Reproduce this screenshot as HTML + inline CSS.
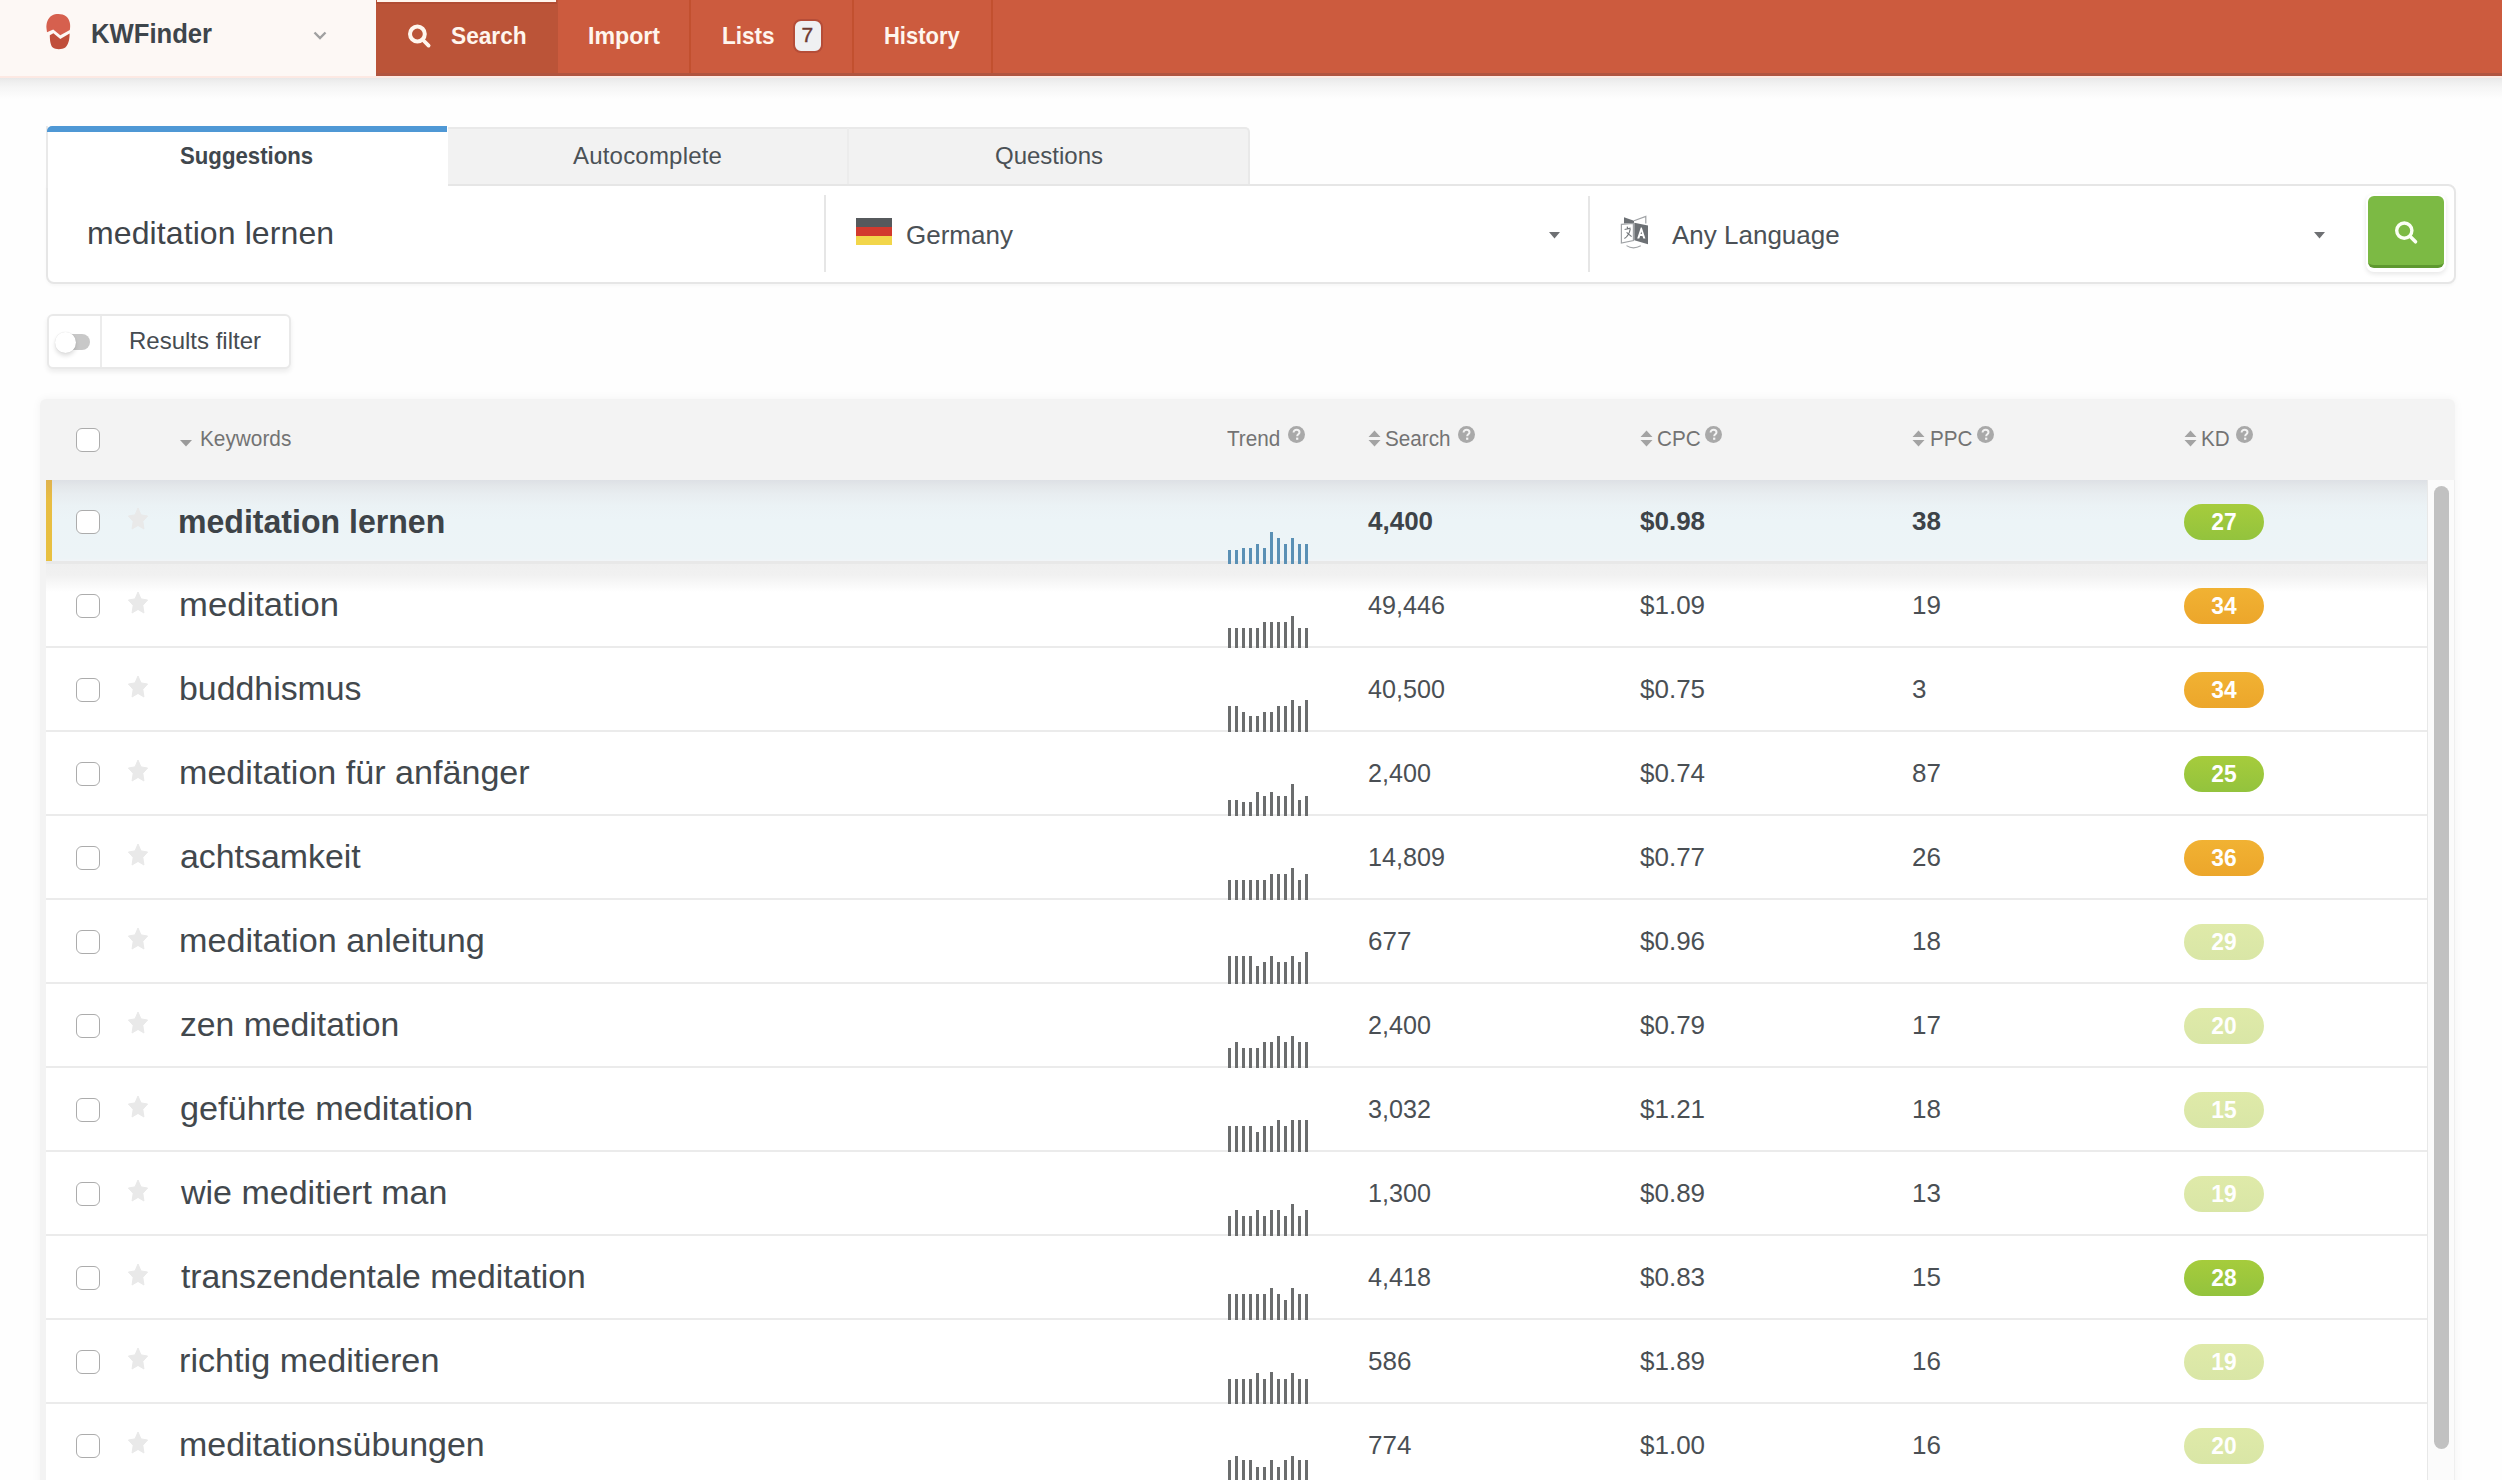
<!DOCTYPE html><html><head><meta charset="utf-8"><title>KWFinder</title><style>
*{box-sizing:border-box;margin:0;padding:0}
html,body{width:2502px;height:1480px;overflow:hidden;background:#fefefe;font-family:"Liberation Sans",sans-serif;}
.a{position:absolute}
.t{position:absolute;white-space:nowrap;line-height:1;}
.cb{position:absolute;left:76px;width:24px;height:24px;border:1.6px solid #acacac;border-radius:6px;background:#fff;}
.star{position:absolute;left:124.5px;width:26px;height:24px;}
.sep{position:absolute;left:46px;width:2381px;height:2px;background:#ebebeb;}
.badge{position:absolute;left:2184px;width:80px;height:36px;border-radius:18px;}
.bg{background:linear-gradient(#a6cc3c,#93c33d)}
.bo{background:linear-gradient(#f1b233,#eca62b)}
.bp{background:linear-gradient(#dfeaa9,#d9e6a6)}
.bar{position:absolute;width:3px;}
.help{position:absolute;width:17px;height:17px;}
.sort{position:absolute;width:13px;height:17px;}
</style></head><body>
<div class="a" style="left:0;top:77px;width:2502px;height:22px;background:linear-gradient(#e6e6e6,#efefef 5px,#f6f6f6 11px,rgba(253,253,253,0));"></div>
<div class="a" style="left:0;top:0;width:2502px;height:76px;background:#cc5b3e;"></div>
<div class="a" style="left:0;top:0;width:376px;height:76px;background:#fdf8f5;"></div>
<svg class="a" style="left:0;top:0" width="80" height="60" viewBox="0 0 80 60"><path d="M47 32.3 L53.2 29.4 L60.3 35.2 L69.8 30 C70.8 25 70 19.5 66 16.3 C62.5 13.6 56 13.4 52 15.5 C47.5 18 46 24 46.5 28.5 Z" fill="#d6604e"/><path d="M49.8 35.3 L53.4 33.3 L60.3 39.0 L69.6 33.6 C69.8 40 68 45.5 65.3 47.6 C62 49.8 55.5 49.8 52.8 47.6 C50.5 45.5 49.8 40.5 49.8 35.3 Z" fill="#c04e3a"/></svg>
<div class="t" style="left:91px;top:20.30px;font-size:28px;color:#3e454b;font-weight:700;transform:scaleX(0.916);transform-origin:0 0;">KWFinder</div>
<svg class="a" style="left:313px;top:31px" width="14" height="9" viewBox="0 0 14 9"><path d="M1.5 1.5 L7 7 L12.5 1.5" stroke="#a0a0a0" stroke-width="2.4" fill="none"/></svg>
<div class="a" style="left:376px;top:0;width:182px;height:76px;background:#bb5438;"></div>
<div class="a" style="left:377px;top:0;width:179px;height:2px;background:#fff6ee;"></div>
<div class="a" style="left:376px;top:2px;width:181px;height:2px;background:#b04c33;"></div>
<svg class="a" style="left:406px;top:23px" width="26" height="26" viewBox="0 0 26 26"><circle cx="11.4" cy="11" r="7.4" stroke="#fff6ee" stroke-width="4" fill="none"/><path d="M17 17 L22.6 22.6" stroke="#fff6ee" stroke-width="3.8" stroke-linecap="round"/></svg>
<div class="t" style="left:451px;top:23.98px;font-size:24px;color:#fff6ee;font-weight:700;transform:scaleX(0.945);transform-origin:0 0;">Search</div>
<div class="t" style="left:588px;top:23.98px;font-size:24px;color:#fff6ee;font-weight:700;transform:scaleX(0.965);transform-origin:0 0;">Import</div>
<div class="a" style="left:689px;top:0;width:2px;height:76px;background:#c2502f;"></div>
<div class="t" style="left:722px;top:23.98px;font-size:24px;color:#fff6ee;font-weight:700;transform:scaleX(0.94);transform-origin:0 0;">Lists</div>
<div class="a" style="left:793px;top:19px;width:30px;height:34px;border-radius:8px;background:#eff0f2;border:2px solid #b54d38;"></div>
<div class="t" style="left:801.5px;top:24.22px;font-size:21px;color:#6e3a30;font-weight:400;-webkit-text-stroke:0.4px #6e3a30;">7</div>
<div class="a" style="left:852px;top:0;width:2px;height:76px;background:#c2502f;"></div>
<div class="t" style="left:884px;top:23.98px;font-size:24px;color:#fff6ee;font-weight:700;transform:scaleX(0.915);transform-origin:0 0;">History</div>
<div class="a" style="left:991px;top:0;width:2px;height:76px;background:#c2502f;"></div>
<div class="a" style="left:376px;top:73px;width:2126px;height:3px;background:#b0543f;"></div>
<div class="a" style="left:0;top:76px;width:2502px;height:2px;background:#fde9e3;"></div>
<div class="a" style="left:446px;top:127px;width:804px;height:59px;background:#f2f2f2;border:2px solid #e9e9e9;border-bottom:none;border-radius:0 5px 0 0;"></div>
<div class="a" style="left:847px;top:128px;width:2px;height:57px;background:#ececec;"></div>
<div class="a" style="left:46px;top:184px;width:2410px;height:100px;background:#fff;border:2px solid #e6e6e6;border-radius:0 8px 8px 8px;box-shadow:0 2px 3px rgba(0,0,0,0.03);"></div>
<div class="a" style="left:46px;top:126px;width:402px;height:62px;background:#fff;border-left:2px solid #e9e9e9;"></div>
<div class="a" style="left:47px;top:126px;width:400px;height:6px;background:#4f98d5;border-radius:5px 0 0 0;"></div>
<div class="t" style="left:180px;top:143.68px;font-size:24px;color:#40474d;font-weight:700;transform:scaleX(0.925);transform-origin:0 0;">Suggestions</div>
<div class="t" style="left:573px;top:143.68px;font-size:24px;color:#4b5156;font-weight:400;letter-spacing:0.2px;">Autocomplete</div>
<div class="t" style="left:995px;top:143.68px;font-size:24px;color:#4b5156;font-weight:400;">Questions</div>
<div class="t" style="left:87px;top:216.91px;font-size:32px;color:#3f454a;font-weight:400;letter-spacing:0.1px;">meditation lernen</div>
<div class="a" style="left:824px;top:195px;width:2px;height:77px;background:#e6e6e6;"></div>
<div class="a" style="left:856px;top:218px;width:36px;height:9px;background:#56595c;"></div>
<div class="a" style="left:856px;top:227px;width:36px;height:9px;background:#d23a2e;"></div>
<div class="a" style="left:856px;top:236px;width:36px;height:9px;background:#f2d64a;"></div>
<div class="t" style="left:906px;top:221.69px;font-size:26px;color:#4b5156;font-weight:400;">Germany</div>
<svg class="a" style="left:1549px;top:232px" width="11" height="7"><path d="M0 0 L11 0 L5.5 6.5 Z" fill="#6e7073"/></svg>
<div class="a" style="left:1588px;top:196px;width:2px;height:76px;background:#e6e6e6;"></div>
<svg class="a" style="left:1612px;top:210px" width="44" height="44" viewBox="0 0 44 44"><path d="M12 7.3 L22 10.8 L22 13 L12 13.6 Z" fill="#6c7074"/><path d="M9.4 14.4 L21.4 13.4 L21.4 30.6 L9.4 33 Z" fill="#fff" stroke="#a0a3a6" stroke-width="1.2"/><path d="M22.3 12.8 L36 15.4 L36 34.2 L22.3 30.2 Z" fill="#6c7074"/><path d="M22 10.8 L33.8 6.4 L33.8 13.6" fill="none" stroke="#a0a3a6" stroke-width="1.2"/><path d="M25.2 28.6 L28.8 17.4 L29.8 17.4 L33.4 28.6 L31.3 28.6 L30.5 26 L28.1 26 L27.3 28.6 Z M28.6 24 L30 24 L29.3 21.4 Z" fill="#fff"/><path d="M12.6 19.5 L18.6 18.2 M15.2 16.6 L15.6 18.4 M18.2 19 Q17.2 25.5 12.4 28.6 M14.6 22.4 L19.6 26.6" fill="none" stroke="#75797d" stroke-width="1.2"/><path d="M14.5 35.6 Q21 40 28.8 35.8" fill="none" stroke="#a3a6a9" stroke-width="1.1"/></svg>
<div class="t" style="left:1672px;top:221.69px;font-size:26px;color:#4b5156;font-weight:400;">Any Language</div>
<svg class="a" style="left:2314px;top:232px" width="11" height="7"><path d="M0 0 L11 0 L5.5 6.5 Z" fill="#6e7073"/></svg>
<div class="a" style="left:2366px;top:194px;width:80px;height:78px;border-radius:8px;box-shadow:0 2px 5px rgba(0,0,0,0.10);"></div>
<div class="a" style="left:2368px;top:196px;width:76px;height:72px;background:#7cba44;border-bottom:3px solid #5e982f;border-radius:6px;"></div>
<svg class="a" style="left:2392px;top:218px" width="28" height="28" viewBox="0 0 28 28"><circle cx="12.3" cy="12.6" r="7.6" stroke="#fbfff5" stroke-width="3.4" fill="none"/><path d="M18 18.3 L23.5 23.8" stroke="#fbfff5" stroke-width="3.6" stroke-linecap="round"/></svg>
<div class="a" style="left:47px;top:314px;width:244px;height:55px;background:#fff;border:2px solid #e9e9e9;border-radius:6px;box-shadow:0 3px 5px rgba(0,0,0,0.07);"></div>
<div class="a" style="left:100px;top:316px;width:2px;height:51px;background:#ececec;"></div>
<div class="a" style="left:57px;top:334px;width:33px;height:16px;border-radius:8px;background:#c8c8c8;"></div>
<div class="a" style="left:55px;top:332px;width:21px;height:21px;border-radius:50%;background:#fff;box-shadow:0 3px 4px rgba(0,0,0,0.13),0 0 1px rgba(0,0,0,0.15);"></div>
<div class="t" style="left:129px;top:329.48px;font-size:24px;color:#464c51;font-weight:400;">Results filter</div>
<div class="a" style="left:40px;top:399px;width:2415px;height:1200px;border-radius:6px;box-shadow:0 0 10px rgba(0,0,0,0.05);background:#f3f3f3;"></div>
<div class="a" style="left:46px;top:480px;width:2381px;height:1000px;background:#fff;"></div>
<div class="a" style="left:2427px;top:480px;width:28px;height:1000px;background:#fbfbfb;border-left:1.5px solid #e8e8e8;border-right:1.5px solid #efefef;"></div>
<div class="cb" style="top:428px;"></div>
<svg class="a" style="left:180px;top:440px" width="12" height="7"><path d="M0 0 L12 0 L6 6.5 Z" fill="#9a9a9a"/></svg>
<div class="t" style="left:199.5px;top:428.38px;font-size:22px;color:#737373;font-weight:400;transform:scaleX(0.945);transform-origin:0 0;">Keywords</div>
<div class="t" style="left:1227px;top:428.38px;font-size:22px;color:#737373;font-weight:400;transform:scaleX(0.94);transform-origin:0 0;">Trend</div>
<svg class="help" style="left:1288px;top:426px" width="17" height="17" viewBox="0 0 17 17"><circle cx="8.5" cy="8.5" r="8.5" fill="#a9a9a9"/><path d="M5.6 6.6 C5.6 4.8 6.9 3.8 8.6 3.8 C10.3 3.8 11.5 4.8 11.5 6.3 C11.5 8.3 9.2 8.3 9.2 10.2" stroke="#f3f3f3" stroke-width="2" fill="none"/><rect x="8.1" y="11.6" width="2.2" height="2.2" fill="#f3f3f3"/></svg>
<svg class="sort" style="left:1368px;top:430px" width="13" height="17" viewBox="0 0 13 17"><path d="M6.5 0.5 L12.5 7 L0.5 7 Z M0.5 10 L12.5 10 L6.5 16.5 Z" fill="#a3a3a3"/></svg>
<div class="t" style="left:1385px;top:428.38px;font-size:22px;color:#737373;font-weight:400;transform:scaleX(0.94);transform-origin:0 0;">Search</div>
<svg class="help" style="left:1458px;top:426px" width="17" height="17" viewBox="0 0 17 17"><circle cx="8.5" cy="8.5" r="8.5" fill="#a9a9a9"/><path d="M5.6 6.6 C5.6 4.8 6.9 3.8 8.6 3.8 C10.3 3.8 11.5 4.8 11.5 6.3 C11.5 8.3 9.2 8.3 9.2 10.2" stroke="#f3f3f3" stroke-width="2" fill="none"/><rect x="8.1" y="11.6" width="2.2" height="2.2" fill="#f3f3f3"/></svg>
<svg class="sort" style="left:1640px;top:430px" width="13" height="17" viewBox="0 0 13 17"><path d="M6.5 0.5 L12.5 7 L0.5 7 Z M0.5 10 L12.5 10 L6.5 16.5 Z" fill="#a3a3a3"/></svg>
<div class="t" style="left:1657px;top:428.38px;font-size:22px;color:#737373;font-weight:400;transform:scaleX(0.94);transform-origin:0 0;">CPC</div>
<svg class="help" style="left:1705px;top:426px" width="17" height="17" viewBox="0 0 17 17"><circle cx="8.5" cy="8.5" r="8.5" fill="#a9a9a9"/><path d="M5.6 6.6 C5.6 4.8 6.9 3.8 8.6 3.8 C10.3 3.8 11.5 4.8 11.5 6.3 C11.5 8.3 9.2 8.3 9.2 10.2" stroke="#f3f3f3" stroke-width="2" fill="none"/><rect x="8.1" y="11.6" width="2.2" height="2.2" fill="#f3f3f3"/></svg>
<svg class="sort" style="left:1912px;top:430px" width="13" height="17" viewBox="0 0 13 17"><path d="M6.5 0.5 L12.5 7 L0.5 7 Z M0.5 10 L12.5 10 L6.5 16.5 Z" fill="#a3a3a3"/></svg>
<div class="t" style="left:1930px;top:428.38px;font-size:22px;color:#737373;font-weight:400;transform:scaleX(0.94);transform-origin:0 0;">PPC</div>
<svg class="help" style="left:1977px;top:426px" width="17" height="17" viewBox="0 0 17 17"><circle cx="8.5" cy="8.5" r="8.5" fill="#a9a9a9"/><path d="M5.6 6.6 C5.6 4.8 6.9 3.8 8.6 3.8 C10.3 3.8 11.5 4.8 11.5 6.3 C11.5 8.3 9.2 8.3 9.2 10.2" stroke="#f3f3f3" stroke-width="2" fill="none"/><rect x="8.1" y="11.6" width="2.2" height="2.2" fill="#f3f3f3"/></svg>
<svg class="sort" style="left:2184px;top:430px" width="13" height="17" viewBox="0 0 13 17"><path d="M6.5 0.5 L12.5 7 L0.5 7 Z M0.5 10 L12.5 10 L6.5 16.5 Z" fill="#a3a3a3"/></svg>
<div class="t" style="left:2201px;top:428.38px;font-size:22px;color:#737373;font-weight:400;transform:scaleX(0.94);transform-origin:0 0;">KD</div>
<svg class="help" style="left:2236px;top:426px" width="17" height="17" viewBox="0 0 17 17"><circle cx="8.5" cy="8.5" r="8.5" fill="#a9a9a9"/><path d="M5.6 6.6 C5.6 4.8 6.9 3.8 8.6 3.8 C10.3 3.8 11.5 4.8 11.5 6.3 C11.5 8.3 9.2 8.3 9.2 10.2" stroke="#f3f3f3" stroke-width="2" fill="none"/><rect x="8.1" y="11.6" width="2.2" height="2.2" fill="#f3f3f3"/></svg>
<div class="a" style="left:46px;top:480px;width:2381px;height:81px;background:linear-gradient(#dde0e5,#e3e7ea 6px,#e8edf0 14px,#ebf2f5 26px,#ecf4f7 40px,#edf4f7 78px,#f1f4f7 81px);"></div>
<div class="a" style="left:46px;top:561px;width:2381px;height:3px;background:#e8e8e8;"></div>
<div class="a" style="left:46px;top:564px;width:2381px;height:28px;background:linear-gradient(#efefef,#f1f1f1 11px,#f6f6f6 17px,#fafafa 22px,rgba(255,255,255,0));"></div>
<div class="a" style="left:46px;top:480px;width:6px;height:81px;background:linear-gradient(#dfb24e,#e8bd42 20px,#e8c040);"></div>
<div class="cb" style="top:510px;"></div>
<div class="star" style="top:507px;"><svg width="26" height="24" viewBox="0 0 26 24"><path d="M13.00 1.00 L15.97 7.91 L22.60 9.02 L17.80 14.39 L18.93 21.98 L13.00 18.40 L7.07 21.98 L8.20 14.39 L3.40 9.02 L10.03 7.91 Z" fill="#e9e9e9" stroke="#e9e9e9" stroke-width="1" stroke-linejoin="round"/></svg></div>
<div class="t" style="left:178px;top:503.72px;font-size:34px;color:#3d4348;font-weight:700;transform:scaleX(0.943);transform-origin:0 0;">meditation lernen</div>
<div class="bar" style="left:1228px;top:550px;height:14px;background:#5a90b5;"></div>
<div class="bar" style="left:1235px;top:550px;height:14px;background:#5a90b5;"></div>
<div class="bar" style="left:1242px;top:548px;height:16px;background:#5a90b5;"></div>
<div class="bar" style="left:1249px;top:548px;height:16px;background:#5a90b5;"></div>
<div class="bar" style="left:1256px;top:544px;height:20px;background:#5a90b5;"></div>
<div class="bar" style="left:1263px;top:548px;height:16px;background:#5a90b5;"></div>
<div class="bar" style="left:1270px;top:532px;height:32px;background:#5a90b5;"></div>
<div class="bar" style="left:1277px;top:538px;height:26px;background:#5a90b5;"></div>
<div class="bar" style="left:1284px;top:544px;height:20px;background:#5a90b5;"></div>
<div class="bar" style="left:1291px;top:538px;height:26px;background:#5a90b5;"></div>
<div class="bar" style="left:1298px;top:544px;height:20px;background:#5a90b5;"></div>
<div class="bar" style="left:1305px;top:544px;height:20px;background:#5a90b5;"></div>
<div class="t" style="left:1368px;top:508.49px;font-size:26px;color:#3d4348;font-weight:700;">4,400</div>
<div class="t" style="left:1640px;top:508.49px;font-size:26px;color:#3d4348;font-weight:700;">$0.98</div>
<div class="t" style="left:1912px;top:508.49px;font-size:26px;color:#3d4348;font-weight:700;">38</div>
<div class="badge bg" style="top:504px;"></div>
<div class="t" style="left:2224px;top:510.18px;font-size:24px;color:#ffffff;font-weight:700;transform:translateX(-50%) scaleX(0.95);">27</div>
<div class="sep" style="top:646px;"></div>
<div class="cb" style="top:594px;"></div>
<div class="star" style="top:591px;"><svg width="26" height="24" viewBox="0 0 26 24"><path d="M13.00 1.00 L15.97 7.91 L22.60 9.02 L17.80 14.39 L18.93 21.98 L13.00 18.40 L7.07 21.98 L8.20 14.39 L3.40 9.02 L10.03 7.91 Z" fill="#e9e9e9" stroke="#e9e9e9" stroke-width="1" stroke-linejoin="round"/></svg></div>
<div class="t" style="left:178.96px;top:587.02px;font-size:34px;color:#42484d;font-weight:400;transform:scaleX(1.0196);transform-origin:0 0;">meditation</div>
<div class="bar" style="left:1228px;top:628px;height:20px;background:#6b6d6e;"></div>
<div class="bar" style="left:1235px;top:628px;height:20px;background:#6b6d6e;"></div>
<div class="bar" style="left:1242px;top:628px;height:20px;background:#6b6d6e;"></div>
<div class="bar" style="left:1249px;top:628px;height:20px;background:#6b6d6e;"></div>
<div class="bar" style="left:1256px;top:628px;height:20px;background:#6b6d6e;"></div>
<div class="bar" style="left:1263px;top:622px;height:26px;background:#6b6d6e;"></div>
<div class="bar" style="left:1270px;top:622px;height:26px;background:#6b6d6e;"></div>
<div class="bar" style="left:1277px;top:622px;height:26px;background:#6b6d6e;"></div>
<div class="bar" style="left:1284px;top:622px;height:26px;background:#6b6d6e;"></div>
<div class="bar" style="left:1291px;top:616px;height:32px;background:#6b6d6e;"></div>
<div class="bar" style="left:1298px;top:628px;height:20px;background:#6b6d6e;"></div>
<div class="bar" style="left:1305px;top:628px;height:20px;background:#6b6d6e;"></div>
<div class="t" style="left:1368px;top:592.49px;font-size:26px;color:#4a4f54;font-weight:400;transform:scaleX(0.967);transform-origin:0 0;">49,446</div>
<div class="t" style="left:1640px;top:592.49px;font-size:26px;color:#4a4f54;font-weight:400;">$1.09</div>
<div class="t" style="left:1912px;top:592.49px;font-size:26px;color:#4a4f54;font-weight:400;">19</div>
<div class="badge bo" style="top:588px;"></div>
<div class="t" style="left:2224px;top:594.18px;font-size:24px;color:#ffffff;font-weight:700;transform:translateX(-50%) scaleX(0.95);">34</div>
<div class="sep" style="top:730px;"></div>
<div class="cb" style="top:678px;"></div>
<div class="star" style="top:675px;"><svg width="26" height="24" viewBox="0 0 26 24"><path d="M13.00 1.00 L15.97 7.91 L22.60 9.02 L17.80 14.39 L18.93 21.98 L13.00 18.40 L7.07 21.98 L8.20 14.39 L3.40 9.02 L10.03 7.91 Z" fill="#e9e9e9" stroke="#e9e9e9" stroke-width="1" stroke-linejoin="round"/></svg></div>
<div class="t" style="left:179.01px;top:671.02px;font-size:34px;color:#42484d;font-weight:400;transform:scaleX(0.9956);transform-origin:0 0;">buddhismus</div>
<div class="bar" style="left:1228px;top:706px;height:26px;background:#6b6d6e;"></div>
<div class="bar" style="left:1235px;top:706px;height:26px;background:#6b6d6e;"></div>
<div class="bar" style="left:1242px;top:712px;height:20px;background:#6b6d6e;"></div>
<div class="bar" style="left:1249px;top:716px;height:16px;background:#6b6d6e;"></div>
<div class="bar" style="left:1256px;top:716px;height:16px;background:#6b6d6e;"></div>
<div class="bar" style="left:1263px;top:712px;height:20px;background:#6b6d6e;"></div>
<div class="bar" style="left:1270px;top:712px;height:20px;background:#6b6d6e;"></div>
<div class="bar" style="left:1277px;top:706px;height:26px;background:#6b6d6e;"></div>
<div class="bar" style="left:1284px;top:706px;height:26px;background:#6b6d6e;"></div>
<div class="bar" style="left:1291px;top:700px;height:32px;background:#6b6d6e;"></div>
<div class="bar" style="left:1298px;top:706px;height:26px;background:#6b6d6e;"></div>
<div class="bar" style="left:1305px;top:700px;height:32px;background:#6b6d6e;"></div>
<div class="t" style="left:1368px;top:676.49px;font-size:26px;color:#4a4f54;font-weight:400;transform:scaleX(0.967);transform-origin:0 0;">40,500</div>
<div class="t" style="left:1640px;top:676.49px;font-size:26px;color:#4a4f54;font-weight:400;">$0.75</div>
<div class="t" style="left:1912px;top:676.49px;font-size:26px;color:#4a4f54;font-weight:400;">3</div>
<div class="badge bo" style="top:672px;"></div>
<div class="t" style="left:2224px;top:678.18px;font-size:24px;color:#ffffff;font-weight:700;transform:translateX(-50%) scaleX(0.95);">34</div>
<div class="sep" style="top:814px;"></div>
<div class="cb" style="top:762px;"></div>
<div class="star" style="top:759px;"><svg width="26" height="24" viewBox="0 0 26 24"><path d="M13.00 1.00 L15.97 7.91 L22.60 9.02 L17.80 14.39 L18.93 21.98 L13.00 18.40 L7.07 21.98 L8.20 14.39 L3.40 9.02 L10.03 7.91 Z" fill="#e9e9e9" stroke="#e9e9e9" stroke-width="1" stroke-linejoin="round"/></svg></div>
<div class="t" style="left:178.99px;top:755.02px;font-size:34px;color:#42484d;font-weight:400;transform:scaleX(1.0029);transform-origin:0 0;">meditation für anfänger</div>
<div class="bar" style="left:1228px;top:800px;height:16px;background:#6b6d6e;"></div>
<div class="bar" style="left:1235px;top:800px;height:16px;background:#6b6d6e;"></div>
<div class="bar" style="left:1242px;top:802px;height:14px;background:#6b6d6e;"></div>
<div class="bar" style="left:1249px;top:802px;height:14px;background:#6b6d6e;"></div>
<div class="bar" style="left:1256px;top:792px;height:24px;background:#6b6d6e;"></div>
<div class="bar" style="left:1263px;top:796px;height:20px;background:#6b6d6e;"></div>
<div class="bar" style="left:1270px;top:792px;height:24px;background:#6b6d6e;"></div>
<div class="bar" style="left:1277px;top:796px;height:20px;background:#6b6d6e;"></div>
<div class="bar" style="left:1284px;top:796px;height:20px;background:#6b6d6e;"></div>
<div class="bar" style="left:1291px;top:784px;height:32px;background:#6b6d6e;"></div>
<div class="bar" style="left:1298px;top:800px;height:16px;background:#6b6d6e;"></div>
<div class="bar" style="left:1305px;top:796px;height:20px;background:#6b6d6e;"></div>
<div class="t" style="left:1368px;top:760.49px;font-size:26px;color:#4a4f54;font-weight:400;transform:scaleX(0.967);transform-origin:0 0;">2,400</div>
<div class="t" style="left:1640px;top:760.49px;font-size:26px;color:#4a4f54;font-weight:400;">$0.74</div>
<div class="t" style="left:1912px;top:760.49px;font-size:26px;color:#4a4f54;font-weight:400;">87</div>
<div class="badge bg" style="top:756px;"></div>
<div class="t" style="left:2224px;top:762.18px;font-size:24px;color:#ffffff;font-weight:700;transform:translateX(-50%) scaleX(0.95);">25</div>
<div class="sep" style="top:898px;"></div>
<div class="cb" style="top:846px;"></div>
<div class="star" style="top:843px;"><svg width="26" height="24" viewBox="0 0 26 24"><path d="M13.00 1.00 L15.97 7.91 L22.60 9.02 L17.80 14.39 L18.93 21.98 L13.00 18.40 L7.07 21.98 L8.20 14.39 L3.40 9.02 L10.03 7.91 Z" fill="#e9e9e9" stroke="#e9e9e9" stroke-width="1" stroke-linejoin="round"/></svg></div>
<div class="t" style="left:180.0px;top:839.02px;font-size:34px;color:#42484d;font-weight:400;transform:scaleX(0.9961);transform-origin:0 0;">achtsamkeit</div>
<div class="bar" style="left:1228px;top:880px;height:20px;background:#6b6d6e;"></div>
<div class="bar" style="left:1235px;top:880px;height:20px;background:#6b6d6e;"></div>
<div class="bar" style="left:1242px;top:880px;height:20px;background:#6b6d6e;"></div>
<div class="bar" style="left:1249px;top:880px;height:20px;background:#6b6d6e;"></div>
<div class="bar" style="left:1256px;top:880px;height:20px;background:#6b6d6e;"></div>
<div class="bar" style="left:1263px;top:880px;height:20px;background:#6b6d6e;"></div>
<div class="bar" style="left:1270px;top:874px;height:26px;background:#6b6d6e;"></div>
<div class="bar" style="left:1277px;top:874px;height:26px;background:#6b6d6e;"></div>
<div class="bar" style="left:1284px;top:874px;height:26px;background:#6b6d6e;"></div>
<div class="bar" style="left:1291px;top:868px;height:32px;background:#6b6d6e;"></div>
<div class="bar" style="left:1298px;top:880px;height:20px;background:#6b6d6e;"></div>
<div class="bar" style="left:1305px;top:874px;height:26px;background:#6b6d6e;"></div>
<div class="t" style="left:1368px;top:844.49px;font-size:26px;color:#4a4f54;font-weight:400;transform:scaleX(0.967);transform-origin:0 0;">14,809</div>
<div class="t" style="left:1640px;top:844.49px;font-size:26px;color:#4a4f54;font-weight:400;">$0.77</div>
<div class="t" style="left:1912px;top:844.49px;font-size:26px;color:#4a4f54;font-weight:400;">26</div>
<div class="badge bo" style="top:840px;"></div>
<div class="t" style="left:2224px;top:846.18px;font-size:24px;color:#ffffff;font-weight:700;transform:translateX(-50%) scaleX(0.95);">36</div>
<div class="sep" style="top:982px;"></div>
<div class="cb" style="top:930px;"></div>
<div class="star" style="top:927px;"><svg width="26" height="24" viewBox="0 0 26 24"><path d="M13.00 1.00 L15.97 7.91 L22.60 9.02 L17.80 14.39 L18.93 21.98 L13.00 18.40 L7.07 21.98 L8.20 14.39 L3.40 9.02 L10.03 7.91 Z" fill="#e9e9e9" stroke="#e9e9e9" stroke-width="1" stroke-linejoin="round"/></svg></div>
<div class="t" style="left:178.99px;top:923.02px;font-size:34px;color:#42484d;font-weight:400;transform:scaleX(1.005);transform-origin:0 0;">meditation anleitung</div>
<div class="bar" style="left:1228px;top:956px;height:28px;background:#6b6d6e;"></div>
<div class="bar" style="left:1235px;top:956px;height:28px;background:#6b6d6e;"></div>
<div class="bar" style="left:1242px;top:956px;height:28px;background:#6b6d6e;"></div>
<div class="bar" style="left:1249px;top:956px;height:28px;background:#6b6d6e;"></div>
<div class="bar" style="left:1256px;top:966px;height:18px;background:#6b6d6e;"></div>
<div class="bar" style="left:1263px;top:962px;height:22px;background:#6b6d6e;"></div>
<div class="bar" style="left:1270px;top:956px;height:28px;background:#6b6d6e;"></div>
<div class="bar" style="left:1277px;top:962px;height:22px;background:#6b6d6e;"></div>
<div class="bar" style="left:1284px;top:962px;height:22px;background:#6b6d6e;"></div>
<div class="bar" style="left:1291px;top:956px;height:28px;background:#6b6d6e;"></div>
<div class="bar" style="left:1298px;top:962px;height:22px;background:#6b6d6e;"></div>
<div class="bar" style="left:1305px;top:952px;height:32px;background:#6b6d6e;"></div>
<div class="t" style="left:1368px;top:928.49px;font-size:26px;color:#4a4f54;font-weight:400;">677</div>
<div class="t" style="left:1640px;top:928.49px;font-size:26px;color:#4a4f54;font-weight:400;">$0.96</div>
<div class="t" style="left:1912px;top:928.49px;font-size:26px;color:#4a4f54;font-weight:400;">18</div>
<div class="badge bp" style="top:924px;"></div>
<div class="t" style="left:2224px;top:930.18px;font-size:24px;color:#ffffff;font-weight:700;transform:translateX(-50%) scaleX(0.95);">29</div>
<div class="sep" style="top:1066px;"></div>
<div class="cb" style="top:1014px;"></div>
<div class="star" style="top:1011px;"><svg width="26" height="24" viewBox="0 0 26 24"><path d="M13.00 1.00 L15.97 7.91 L22.60 9.02 L17.80 14.39 L18.93 21.98 L13.00 18.40 L7.07 21.98 L8.20 14.39 L3.40 9.02 L10.03 7.91 Z" fill="#e9e9e9" stroke="#e9e9e9" stroke-width="1" stroke-linejoin="round"/></svg></div>
<div class="t" style="left:180.01px;top:1007.02px;font-size:34px;color:#42484d;font-weight:400;transform:scaleX(0.9917);transform-origin:0 0;">zen meditation</div>
<div class="bar" style="left:1228px;top:1048px;height:20px;background:#6b6d6e;"></div>
<div class="bar" style="left:1235px;top:1042px;height:26px;background:#6b6d6e;"></div>
<div class="bar" style="left:1242px;top:1048px;height:20px;background:#6b6d6e;"></div>
<div class="bar" style="left:1249px;top:1048px;height:20px;background:#6b6d6e;"></div>
<div class="bar" style="left:1256px;top:1048px;height:20px;background:#6b6d6e;"></div>
<div class="bar" style="left:1263px;top:1042px;height:26px;background:#6b6d6e;"></div>
<div class="bar" style="left:1270px;top:1042px;height:26px;background:#6b6d6e;"></div>
<div class="bar" style="left:1277px;top:1036px;height:32px;background:#6b6d6e;"></div>
<div class="bar" style="left:1284px;top:1042px;height:26px;background:#6b6d6e;"></div>
<div class="bar" style="left:1291px;top:1036px;height:32px;background:#6b6d6e;"></div>
<div class="bar" style="left:1298px;top:1042px;height:26px;background:#6b6d6e;"></div>
<div class="bar" style="left:1305px;top:1042px;height:26px;background:#6b6d6e;"></div>
<div class="t" style="left:1368px;top:1012.49px;font-size:26px;color:#4a4f54;font-weight:400;transform:scaleX(0.967);transform-origin:0 0;">2,400</div>
<div class="t" style="left:1640px;top:1012.49px;font-size:26px;color:#4a4f54;font-weight:400;">$0.79</div>
<div class="t" style="left:1912px;top:1012.49px;font-size:26px;color:#4a4f54;font-weight:400;">17</div>
<div class="badge bp" style="top:1008px;"></div>
<div class="t" style="left:2224px;top:1014.18px;font-size:24px;color:#ffffff;font-weight:700;transform:translateX(-50%) scaleX(0.95);">20</div>
<div class="sep" style="top:1150px;"></div>
<div class="cb" style="top:1098px;"></div>
<div class="star" style="top:1095px;"><svg width="26" height="24" viewBox="0 0 26 24"><path d="M13.00 1.00 L15.97 7.91 L22.60 9.02 L17.80 14.39 L18.93 21.98 L13.00 18.40 L7.07 21.98 L8.20 14.39 L3.40 9.02 L10.03 7.91 Z" fill="#e9e9e9" stroke="#e9e9e9" stroke-width="1" stroke-linejoin="round"/></svg></div>
<div class="t" style="left:179.99px;top:1091.02px;font-size:34px;color:#42484d;font-weight:400;transform:scaleX(1.0069);transform-origin:0 0;">geführte meditation</div>
<div class="bar" style="left:1228px;top:1126px;height:26px;background:#6b6d6e;"></div>
<div class="bar" style="left:1235px;top:1126px;height:26px;background:#6b6d6e;"></div>
<div class="bar" style="left:1242px;top:1126px;height:26px;background:#6b6d6e;"></div>
<div class="bar" style="left:1249px;top:1126px;height:26px;background:#6b6d6e;"></div>
<div class="bar" style="left:1256px;top:1132px;height:20px;background:#6b6d6e;"></div>
<div class="bar" style="left:1263px;top:1126px;height:26px;background:#6b6d6e;"></div>
<div class="bar" style="left:1270px;top:1126px;height:26px;background:#6b6d6e;"></div>
<div class="bar" style="left:1277px;top:1120px;height:32px;background:#6b6d6e;"></div>
<div class="bar" style="left:1284px;top:1126px;height:26px;background:#6b6d6e;"></div>
<div class="bar" style="left:1291px;top:1120px;height:32px;background:#6b6d6e;"></div>
<div class="bar" style="left:1298px;top:1120px;height:32px;background:#6b6d6e;"></div>
<div class="bar" style="left:1305px;top:1120px;height:32px;background:#6b6d6e;"></div>
<div class="t" style="left:1368px;top:1096.49px;font-size:26px;color:#4a4f54;font-weight:400;transform:scaleX(0.967);transform-origin:0 0;">3,032</div>
<div class="t" style="left:1640px;top:1096.49px;font-size:26px;color:#4a4f54;font-weight:400;">$1.21</div>
<div class="t" style="left:1912px;top:1096.49px;font-size:26px;color:#4a4f54;font-weight:400;">18</div>
<div class="badge bp" style="top:1092px;"></div>
<div class="t" style="left:2224px;top:1098.18px;font-size:24px;color:#ffffff;font-weight:700;transform:translateX(-50%) scaleX(0.95);">15</div>
<div class="sep" style="top:1234px;"></div>
<div class="cb" style="top:1182px;"></div>
<div class="star" style="top:1179px;"><svg width="26" height="24" viewBox="0 0 26 24"><path d="M13.00 1.00 L15.97 7.91 L22.60 9.02 L17.80 14.39 L18.93 21.98 L13.00 18.40 L7.07 21.98 L8.20 14.39 L3.40 9.02 L10.03 7.91 Z" fill="#e9e9e9" stroke="#e9e9e9" stroke-width="1" stroke-linejoin="round"/></svg></div>
<div class="t" style="left:181.0px;top:1175.02px;font-size:34px;color:#42484d;font-weight:400;">wie meditiert man</div>
<div class="bar" style="left:1228px;top:1216px;height:20px;background:#6b6d6e;"></div>
<div class="bar" style="left:1235px;top:1210px;height:26px;background:#6b6d6e;"></div>
<div class="bar" style="left:1242px;top:1216px;height:20px;background:#6b6d6e;"></div>
<div class="bar" style="left:1249px;top:1216px;height:20px;background:#6b6d6e;"></div>
<div class="bar" style="left:1256px;top:1210px;height:26px;background:#6b6d6e;"></div>
<div class="bar" style="left:1263px;top:1216px;height:20px;background:#6b6d6e;"></div>
<div class="bar" style="left:1270px;top:1210px;height:26px;background:#6b6d6e;"></div>
<div class="bar" style="left:1277px;top:1210px;height:26px;background:#6b6d6e;"></div>
<div class="bar" style="left:1284px;top:1216px;height:20px;background:#6b6d6e;"></div>
<div class="bar" style="left:1291px;top:1204px;height:32px;background:#6b6d6e;"></div>
<div class="bar" style="left:1298px;top:1216px;height:20px;background:#6b6d6e;"></div>
<div class="bar" style="left:1305px;top:1210px;height:26px;background:#6b6d6e;"></div>
<div class="t" style="left:1368px;top:1180.49px;font-size:26px;color:#4a4f54;font-weight:400;transform:scaleX(0.967);transform-origin:0 0;">1,300</div>
<div class="t" style="left:1640px;top:1180.49px;font-size:26px;color:#4a4f54;font-weight:400;">$0.89</div>
<div class="t" style="left:1912px;top:1180.49px;font-size:26px;color:#4a4f54;font-weight:400;">13</div>
<div class="badge bp" style="top:1176px;"></div>
<div class="t" style="left:2224px;top:1182.18px;font-size:24px;color:#ffffff;font-weight:700;transform:translateX(-50%) scaleX(0.95);">19</div>
<div class="sep" style="top:1318px;"></div>
<div class="cb" style="top:1266px;"></div>
<div class="star" style="top:1263px;"><svg width="26" height="24" viewBox="0 0 26 24"><path d="M13.00 1.00 L15.97 7.91 L22.60 9.02 L17.80 14.39 L18.93 21.98 L13.00 18.40 L7.07 21.98 L8.20 14.39 L3.40 9.02 L10.03 7.91 Z" fill="#e9e9e9" stroke="#e9e9e9" stroke-width="1" stroke-linejoin="round"/></svg></div>
<div class="t" style="left:181.0px;top:1259.02px;font-size:34px;color:#42484d;font-weight:400;transform:scaleX(0.9914);transform-origin:0 0;">transzendentale meditation</div>
<div class="bar" style="left:1228px;top:1294px;height:26px;background:#6b6d6e;"></div>
<div class="bar" style="left:1235px;top:1294px;height:26px;background:#6b6d6e;"></div>
<div class="bar" style="left:1242px;top:1294px;height:26px;background:#6b6d6e;"></div>
<div class="bar" style="left:1249px;top:1294px;height:26px;background:#6b6d6e;"></div>
<div class="bar" style="left:1256px;top:1294px;height:26px;background:#6b6d6e;"></div>
<div class="bar" style="left:1263px;top:1294px;height:26px;background:#6b6d6e;"></div>
<div class="bar" style="left:1270px;top:1288px;height:32px;background:#6b6d6e;"></div>
<div class="bar" style="left:1277px;top:1294px;height:26px;background:#6b6d6e;"></div>
<div class="bar" style="left:1284px;top:1300px;height:20px;background:#6b6d6e;"></div>
<div class="bar" style="left:1291px;top:1288px;height:32px;background:#6b6d6e;"></div>
<div class="bar" style="left:1298px;top:1294px;height:26px;background:#6b6d6e;"></div>
<div class="bar" style="left:1305px;top:1294px;height:26px;background:#6b6d6e;"></div>
<div class="t" style="left:1368px;top:1264.49px;font-size:26px;color:#4a4f54;font-weight:400;transform:scaleX(0.967);transform-origin:0 0;">4,418</div>
<div class="t" style="left:1640px;top:1264.49px;font-size:26px;color:#4a4f54;font-weight:400;">$0.83</div>
<div class="t" style="left:1912px;top:1264.49px;font-size:26px;color:#4a4f54;font-weight:400;">15</div>
<div class="badge bg" style="top:1260px;"></div>
<div class="t" style="left:2224px;top:1266.18px;font-size:24px;color:#ffffff;font-weight:700;transform:translateX(-50%) scaleX(0.95);">28</div>
<div class="sep" style="top:1402px;"></div>
<div class="cb" style="top:1350px;"></div>
<div class="star" style="top:1347px;"><svg width="26" height="24" viewBox="0 0 26 24"><path d="M13.00 1.00 L15.97 7.91 L22.60 9.02 L17.80 14.39 L18.93 21.98 L13.00 18.40 L7.07 21.98 L8.20 14.39 L3.40 9.02 L10.03 7.91 Z" fill="#e9e9e9" stroke="#e9e9e9" stroke-width="1" stroke-linejoin="round"/></svg></div>
<div class="t" style="left:178.99px;top:1343.02px;font-size:34px;color:#42484d;font-weight:400;transform:scaleX(1.0059);transform-origin:0 0;">richtig meditieren</div>
<div class="bar" style="left:1228px;top:1379px;height:25px;background:#6b6d6e;"></div>
<div class="bar" style="left:1235px;top:1379px;height:25px;background:#6b6d6e;"></div>
<div class="bar" style="left:1242px;top:1379px;height:25px;background:#6b6d6e;"></div>
<div class="bar" style="left:1249px;top:1379px;height:25px;background:#6b6d6e;"></div>
<div class="bar" style="left:1256px;top:1373px;height:31px;background:#6b6d6e;"></div>
<div class="bar" style="left:1263px;top:1379px;height:25px;background:#6b6d6e;"></div>
<div class="bar" style="left:1270px;top:1372px;height:32px;background:#6b6d6e;"></div>
<div class="bar" style="left:1277px;top:1379px;height:25px;background:#6b6d6e;"></div>
<div class="bar" style="left:1284px;top:1379px;height:25px;background:#6b6d6e;"></div>
<div class="bar" style="left:1291px;top:1373px;height:31px;background:#6b6d6e;"></div>
<div class="bar" style="left:1298px;top:1379px;height:25px;background:#6b6d6e;"></div>
<div class="bar" style="left:1305px;top:1379px;height:25px;background:#6b6d6e;"></div>
<div class="t" style="left:1368px;top:1348.49px;font-size:26px;color:#4a4f54;font-weight:400;">586</div>
<div class="t" style="left:1640px;top:1348.49px;font-size:26px;color:#4a4f54;font-weight:400;">$1.89</div>
<div class="t" style="left:1912px;top:1348.49px;font-size:26px;color:#4a4f54;font-weight:400;">16</div>
<div class="badge bp" style="top:1344px;"></div>
<div class="t" style="left:2224px;top:1350.18px;font-size:24px;color:#ffffff;font-weight:700;transform:translateX(-50%) scaleX(0.95);">19</div>
<div class="sep" style="top:1486px;"></div>
<div class="cb" style="top:1434px;"></div>
<div class="star" style="top:1431px;"><svg width="26" height="24" viewBox="0 0 26 24"><path d="M13.00 1.00 L15.97 7.91 L22.60 9.02 L17.80 14.39 L18.93 21.98 L13.00 18.40 L7.07 21.98 L8.20 14.39 L3.40 9.02 L10.03 7.91 Z" fill="#e9e9e9" stroke="#e9e9e9" stroke-width="1" stroke-linejoin="round"/></svg></div>
<div class="t" style="left:179.0px;top:1427.02px;font-size:34px;color:#42484d;font-weight:400;transform:scaleX(0.9983);transform-origin:0 0;">meditationsübungen</div>
<div class="bar" style="left:1228px;top:1460px;height:28px;background:#6b6d6e;"></div>
<div class="bar" style="left:1235px;top:1456px;height:32px;background:#6b6d6e;"></div>
<div class="bar" style="left:1242px;top:1460px;height:28px;background:#6b6d6e;"></div>
<div class="bar" style="left:1249px;top:1460px;height:28px;background:#6b6d6e;"></div>
<div class="bar" style="left:1256px;top:1467px;height:21px;background:#6b6d6e;"></div>
<div class="bar" style="left:1263px;top:1467px;height:21px;background:#6b6d6e;"></div>
<div class="bar" style="left:1270px;top:1460px;height:28px;background:#6b6d6e;"></div>
<div class="bar" style="left:1277px;top:1467px;height:21px;background:#6b6d6e;"></div>
<div class="bar" style="left:1284px;top:1460px;height:28px;background:#6b6d6e;"></div>
<div class="bar" style="left:1291px;top:1456px;height:32px;background:#6b6d6e;"></div>
<div class="bar" style="left:1298px;top:1460px;height:28px;background:#6b6d6e;"></div>
<div class="bar" style="left:1305px;top:1460px;height:28px;background:#6b6d6e;"></div>
<div class="t" style="left:1368px;top:1432.49px;font-size:26px;color:#4a4f54;font-weight:400;">774</div>
<div class="t" style="left:1640px;top:1432.49px;font-size:26px;color:#4a4f54;font-weight:400;">$1.00</div>
<div class="t" style="left:1912px;top:1432.49px;font-size:26px;color:#4a4f54;font-weight:400;">16</div>
<div class="badge bp" style="top:1428px;"></div>
<div class="t" style="left:2224px;top:1434.18px;font-size:24px;color:#ffffff;font-weight:700;transform:translateX(-50%) scaleX(0.95);">20</div>
<div class="a" style="left:2434px;top:486px;width:15px;height:963px;border-radius:8px;background:#c1c1c1;"></div>
</body></html>
